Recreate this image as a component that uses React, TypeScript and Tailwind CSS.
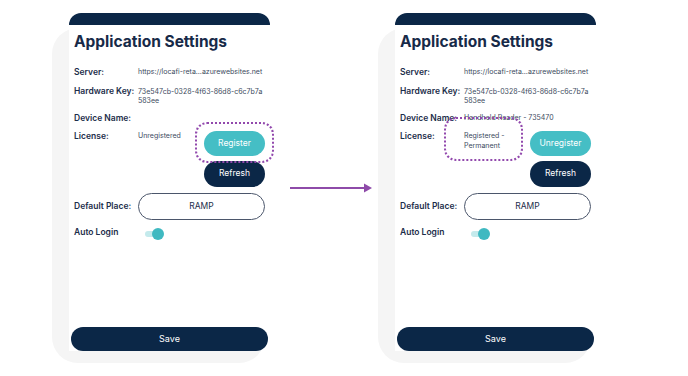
import React from 'react';

const NAVY = 'bg-[#0b2747]';

interface PanelProps {
  deviceName: string;
  license: string[];
  action: string;
  ring: 'button' | 'license';
}

const Row: React.FC<{ label: string; className?: string; children?: React.ReactNode }> = ({
  label,
  className,
  children,
}) => (
  <div className={`flex ${className ?? 'items-start'}`}>
    <div className="w-[64px] shrink-0 text-[8.5px] font-semibold leading-[12px] text-[#1c2d4a]">{label}</div>
    <div className="min-w-0 flex-1">{children}</div>
  </div>
);

const Panel: React.FC<PanelProps> = ({ deviceName, license, action, ring }) => (
  <div className="h-[335px] w-[213px] shrink-0 rounded-[26px] bg-[#f5f5f5] pl-[17px]">
    <div className="relative -mt-[15px] flex h-[338px] w-[201px] flex-col rounded-t-[14px] bg-white">
      <div className={`h-[12px] rounded-t-[14px] ${NAVY}`} />
      <div className="flex flex-1 flex-col pl-[5px]">
        <h1 className="mt-[7px] text-[15.5px] font-bold leading-[20px] text-[#172a48]">Application Settings</h1>

        <Row label="Server:" className="mt-[14px] items-start">
          <div className="text-[7px] leading-[12px] text-[#3c4a5e]">https://locafi-reta…azurewebsites.net</div>
        </Row>

        <Row label="Hardware Key:" className="mt-[7px] items-start">
          <div className="mt-[1.5px] w-[128px] break-all text-[7px] leading-[9px] text-[#3c4a5e]">
            73e547cb-0328-4f63-86d8-c6c7b7a583ee
          </div>
        </Row>

        <Row label="Device Name:" className="mt-[7px] items-start">
          <div className="text-[7px] leading-[12px] text-[#3c4a5e]">{deviceName}</div>
        </Row>

        <Row label="License:" className="mt-[6px] items-start">
          <div className="flex">
            <div className="w-[66px] pt-[1px] text-[7px] leading-[10px] text-[#3c4a5e]">
              {license.map((l) => (
                <div key={l}>{l}</div>
              ))}
            </div>
            <div className="mt-[1px] flex w-[61px] flex-col gap-[5px]">
              <button className="h-[25px] rounded-full bg-[#45bec5] text-[8.5px] text-white">{action}</button>
              <button className={`h-[26px] rounded-full ${NAVY} text-[8.5px] text-white`}>Refresh</button>
            </div>
          </div>
        </Row>

        <Row label="Default Place:" className="mt-[6px] items-center">
          <div className="flex h-[27px] w-[127px] items-center justify-center rounded-full border border-[#4b566b] text-[8.5px] text-[#1c2d4a]">
            RAMP
          </div>
        </Row>

        <Row label="Auto Login" className="mt-[6px] items-start">
          <div className="relative ml-[7px] mt-[2px] h-[12px] w-[19px]">
            <div className="absolute left-0 top-[3px] h-[6px] w-[16px] rounded-full bg-[#c4eaec]" />
            <div className="absolute right-0 top-0 h-[12px] w-[12px] rounded-full bg-[#3fb9c1]" />
          </div>
        </Row>

        <div className="flex-1" />
      </div>
      <button className={`mx-[2px] h-[24px] rounded-full ${NAVY} text-[9px] text-white`}>Save</button>

      {ring === 'button' ? (
        <div className="absolute left-[126px] top-[109px] h-[41px] w-[79px] rounded-[12px] border-2 border-dotted border-[#9249ad]" />
      ) : (
        <div className="absolute left-[49px] top-[104px] h-[44px] w-[79px] rounded-[12px] border-2 border-dotted border-[#9249ad]" />
      )}
    </div>
  </div>
);

export default function App() {
  return (
    <div className="flex h-[376px] w-[688px] items-start bg-white pl-[52px] pt-[28px] font-['Inter',sans-serif]">
      <Panel deviceName="" license={['Unregistered']} action="Register" ring="button" />
      <div className="flex w-[113px] shrink-0 pl-[25px] pt-[154px]">
        <svg width="82" height="12" viewBox="0 0 82 12">
          <line x1="0" y1="6" x2="76" y2="6" stroke="#8e4ba9" strokeWidth="2" />
          <polygon points="74,1.5 82,6 74,10.5" fill="#8e4ba9" />
        </svg>
      </div>
      <Panel
        deviceName="Handheld Reader - 735470"
        license={['Registered -', 'Permanent']}
        action="Unregister"
        ring="license"
      />
    </div>
  );
}
